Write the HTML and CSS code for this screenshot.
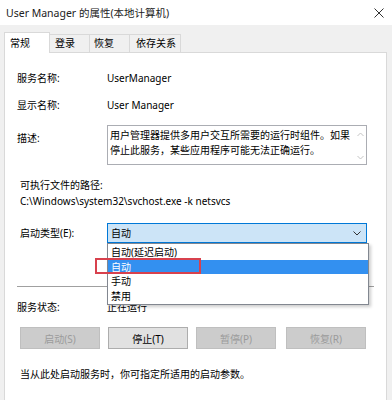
FILE: index.html
```html
<!DOCTYPE html>
<html>
<head>
<meta charset="utf-8">
<title>User Manager 的属性(本地计算机)</title>
<link rel="stylesheet" href="styles.css">
</head>
<body>
<div class="window">
  <div class="titlebar">
    <span class="title">User Manager 的属性(本地计算机)</span>
    <svg class="close" width="10" height="10" viewBox="0 0 10 10"><path d="M0.5 0.5 L9.5 9.5 M9.5 0.5 L0.5 9.5" stroke="#333" stroke-width="1" fill="none"/></svg>
  </div>

  <div class="tabs">
    <div class="tab active">常规</div>
    <div class="tab">登录</div>
    <div class="tab">恢复</div>
    <div class="tab">依存关系</div>
  </div>

  <div class="panel">
    <div class="row first">
      <span class="label">服务名称:</span>
      <span class="value">UserManager</span>
    </div>
    <div class="row">
      <span class="label">显示名称:</span>
      <span class="value">User Manager</span>
    </div>
    <div class="row desc-row">
      <span class="label">描述:</span>
      <div class="desc">
        <div class="desc-text">用户管理器提供多用户交互所需要的运行时组件。如果停止此服务，某些应用程序可能无法正确运行。</div>
        <div class="scroll">
          <svg width="7" height="5" viewBox="0 0 7 5"><path d="M0.5 4 L3.5 1 L6.5 4" stroke="#c4c4c4" fill="none"/></svg>
          <svg width="7" height="5" viewBox="0 0 7 5"><path d="M0.5 1 L3.5 4 L6.5 1" stroke="#c4c4c4" fill="none"/></svg>
        </div>
      </div>
    </div>

    <div class="path-label">可执行文件的路径:</div>
    <div class="path">C:\Windows\system32\svchost.exe -k netsvcs</div>

    <div class="row start-row">
      <span class="label">启动类型(E):</span>
      <div class="combo">
        <span>自动</span>
        <svg width="8" height="5" viewBox="0 0 8 5"><path d="M0.5 0.5 L4 4 L7.5 0.5" stroke="#333" fill="none"/></svg>
        <ul class="list">
          <li>自动(延迟启动)</li>
          <li class="selected">自动</li>
          <li>手动</li>
          <li>禁用</li>
        </ul>
        <div class="mark"></div>
      </div>
    </div>

    <hr class="sep">

    <div class="row status-row">
      <span class="label">服务状态:</span>
      <span class="value">正在运行</span>
    </div>

    <div class="buttons">
      <button class="btn" disabled>启动(S)</button>
      <button class="btn">停止(T)</button>
      <button class="btn" disabled>暂停(P)</button>
      <button class="btn" disabled>恢复(R)</button>
    </div>

    <p class="note">当从此处启动服务时，你可指定所适用的启动参数。</p>
  </div>
</div>
</body>
</html>
```

FILE: styles.css
```css
/* Service properties dialog */

body
{ margin: 0;
  font-family: "Noto Sans", "Noto Sans CJK SC", sans-serif;
  font-size: 10px;
  color: #000;
}

.window
{ width: 392px;
  height: 400px;
  background-color: #f0f0f0;
  display: flex;
  flex-direction: column;
  overflow: hidden;
}

/* Title bar */

.titlebar
{ height: 25px;
  flex: none;
  background-color: #fff;
  display: flex;
  align-items: center;
  justify-content: space-between;
  padding: 0 8px 0 6px;
}

.title
{ font-size: 10.5px;
  color: #222;
}

/* Tabs */

.tabs
{ height: 27px;
  flex: none;
  display: flex;
  align-items: flex-end;
  padding-left: 4px;
}

.tab
{ height: 17px;
  line-height: 16px;
  padding: 0 0 0 4px;
  border: 1px solid #d9d9d9;
  border-bottom: none;
  margin-left: -1px;
  background-color: #f0f0f0;
  width: 34px;
}

.tab:nth-child(2) { width: 34px; padding-left: 5px; }
.tab:nth-child(3) { width: 35px; padding-left: 4px; }
.tab:nth-child(4) { width: 44px; padding-left: 6px; }

.tab.active
{ height: 20px;
  line-height: 20px;
  background-color: #fff;
  margin-left: 0;
  width: 39px;
  padding-left: 5px;
  position: relative;
  z-index: 1;
  margin-bottom: -1px;
}

/* Page */

.panel
{ flex: 1;
  background-color: #fff;
  border: 1px solid #d9d9d9;
  border-bottom: none;
  margin: 0 5px 0 4px;
  padding: 17px 0 0 12px;
}

.row
{ display: flex;
  align-items: center;
  height: 16px;
  line-height: 16px;
}

.row + .row { margin-top: 11px; }

.label
{ width: 90px;
  flex: none;
}

.desc-row
{ height: 40px;
  align-items: flex-start;
  margin-top: 12px !important;
}

.desc-row .label { margin-top: 5px; }

.desc
{ width: 260px;
  height: 40px;
  border: 1px solid #abadb3;
  box-sizing: border-box;
  display: flex;
}

.desc-text
{ flex: 1;
  padding: 2px 4px 0 2px;
  line-height: 15px;
}

.scroll
{ width: 12px;
  display: flex;
  flex-direction: column;
  justify-content: space-between;
  align-items: center;
  padding: 6px 0 4px;
}

.path-label
{ margin-top: 12px;
  line-height: 16px;
  padding-left: 3px;
}

.path
{ line-height: 16px;
  padding-left: 3px;
}

.start-row
{ height: 20px;
  margin-top: 14px;
}

.start-row .label { padding-left: 3px; width: 87px; }

.combo
{ position: relative;
  width: 260px;
  height: 20px;
  box-sizing: border-box;
  background-color: #cce4f7;
  border: 1px solid #0078d7;
  display: flex;
  align-items: center;
  justify-content: space-between;
  padding: 0 5px 0 3px;
}

.list
{ position: absolute;
  top: 19px;
  left: -1px;
  width: 260px;
  margin: 0;
  padding: 1px 0;
  list-style: none;
  background-color: #fff;
  border: 1px solid #828790;
  box-shadow: 2px 2px 3px rgba(0, 0, 0, 0.2);
  z-index: 2;
}

.list li
{ height: 14.5px;
  line-height: 14.5px;
  padding-left: 3px;
}

.list li.selected
{ background-color: #3390f0;
  color: #fff;
}

.mark
{ position: absolute;
  top: 34px;
  left: -13px;
  width: 102px;
  height: 12px;
  border: 2px solid #d8414d;
  z-index: 3;
}

.sep
{ margin: 43px 12px 0 0;
  border: none;
  border-top: 1px solid #a0a0a0;
}

.status-row
{ margin-top: 12px;
}

/* Buttons */

.buttons
{ display: flex;
  gap: 8px;
  margin-top: 12px;
  padding-left: 3px;
}

.btn
{ width: 80px;
  height: 22px;
  font: inherit;
  background-color: #e1e1e1;
  border: 1px solid #adadad;
  color: #000;
  padding: 0;
}

.btn:nth-child(4) { margin-left: 2px; }

.btn[disabled]
{ background-color: #cccccc;
  border-color: #bfbfbf;
  color: #9b9b9b;
}

.note
{ margin: 17px 0 0 3px;
  line-height: 16px;
}
```
